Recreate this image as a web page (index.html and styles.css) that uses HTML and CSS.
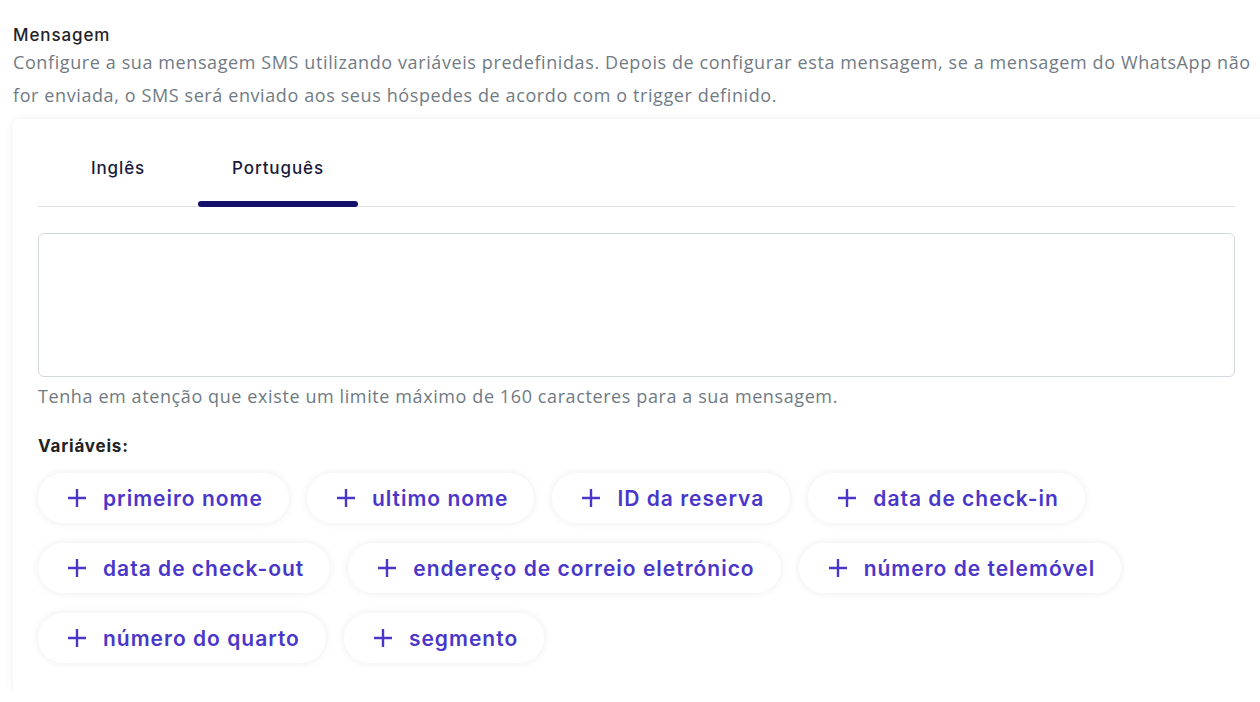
FILE: index.html
```html
<!DOCTYPE html>
<html lang="pt">
<head>
<meta charset="utf-8">
<link rel="stylesheet" href="styles.css">
</head>
<body>
<div class="page">
  <h2 class="title">Mensagem</h2>
  <p class="desc">Configure a sua mensagem SMS utilizando variáveis predefinidas. Depois de configurar esta mensagem, se a mensagem do WhatsApp não for enviada, o SMS será enviado aos seus hóspedes de acordo com o trigger definido.</p>
  <div class="card">
    <div class="tabs">
      <div class="tab">Inglês</div>
      <div class="tab active">Português</div>
    </div>
    <div class="textarea"></div>
    <p class="hint">Tenha em atenção que existe um limite máximo de 160 caracteres para a sua mensagem.</p>
    <div class="vars-label">Variáveis:</div>
    <div class="chips">
      <button class="chip"><svg viewBox="0 0 20 20"><path d="M10 1v18M1 10h18"/></svg>primeiro nome</button>
      <button class="chip"><svg viewBox="0 0 20 20"><path d="M10 1v18M1 10h18"/></svg>ultimo nome</button>
      <button class="chip"><svg viewBox="0 0 20 20"><path d="M10 1v18M1 10h18"/></svg>ID da reserva</button>
      <button class="chip"><svg viewBox="0 0 20 20"><path d="M10 1v18M1 10h18"/></svg>data de check-in</button>
      <button class="chip"><svg viewBox="0 0 20 20"><path d="M10 1v18M1 10h18"/></svg>data de check-out</button>
      <button class="chip"><svg viewBox="0 0 20 20"><path d="M10 1v18M1 10h18"/></svg>endereço de correio eletrónico</button>
      <button class="chip"><svg viewBox="0 0 20 20"><path d="M10 1v18M1 10h18"/></svg>número de telemóvel</button>
      <button class="chip"><svg viewBox="0 0 20 20"><path d="M10 1v18M1 10h18"/></svg>número do quarto</button>
      <button class="chip"><svg viewBox="0 0 20 20"><path d="M10 1v18M1 10h18"/></svg>segmento</button>
    </div>
  </div>
</div>
</body>
</html>
```
FILE: styles.css
```css
html, body {
  margin: 0;
  padding: 0;
  background: #ffffff;
  overflow: hidden;
}
.page {
  padding: 24px 0 0 13px;
  width: 1260px;
  box-sizing: border-box;
}
.title {
  margin: 0;
  font-family: "Inter", "Open Sans", sans-serif;
  font-weight: 500;
  font-size: 17px;
  letter-spacing: 0.9px;
  line-height: 22px;
  color: #1f2328;
}
.desc {
  margin: 0;
  font-family: "Open Sans", sans-serif;
  font-size: 18px;
  letter-spacing: 0.6px;
  line-height: 33px;
  color: #717b84;
  padding-right: 2px;
}
.card {
  margin-top: 7px;
  width: 1260px;
  box-sizing: border-box;
  padding: 0 12px 29px 25px;
  background: #fff;
  border-radius: 6px;
  box-shadow: 0 0 10px rgba(0, 0, 0, 0.07);
}
.tabs {
  display: flex;
  border-bottom: 1px solid #dde1e4;
  width: 1197px;
}
.tab {
  width: 160px;
  text-align: center;
  font-family: "Inter", "Open Sans", sans-serif;
  font-weight: 500;
  font-size: 17px;
  letter-spacing: 0.9px;
  line-height: 22px;
  color: #1a1a3d;
  padding: 38px 0 0;
  height: 87px;
  box-sizing: border-box;
  position: relative;
}
.tab.active::after {
  content: "";
  position: absolute;
  left: 0;
  right: 0;
  bottom: -1px;
  height: 6px;
  border-radius: 3px;
  background: #140f6b;
}
.textarea {
  margin-top: 26px;
  width: 1197px;
  height: 144px;
  box-sizing: border-box;
  border: 1px solid #d3d8dc;
  border-radius: 6px;
}
.hint {
  margin: 6px 0 0;
  font-family: "Open Sans", sans-serif;
  font-size: 18px;
  letter-spacing: 0.6px;
  line-height: 26px;
  color: #6f7a83;
}
.vars-label {
  margin-top: 26px;
  font-family: "Inter", "Open Sans", sans-serif;
  font-weight: 700;
  font-size: 17px;
  letter-spacing: 0.8px;
  line-height: 22px;
  color: #222;
}
.chips {
  margin-top: 16px;
  display: flex;
  flex-wrap: wrap;
  gap: 20px 18px;
  width: 1150px;
}
.chip {
  display: inline-flex;
  align-items: center;
  gap: 16px;
  height: 50px;
  padding: 0 26px 0 29px;
  border: none;
  border-radius: 25px;
  background: #fff;
  box-shadow: 0 0 8px rgba(0, 0, 0, 0.08);
  font-family: "Inter", "Open Sans", sans-serif;
  font-weight: 600;
  font-size: 21px;
  letter-spacing: 1px;
  color: #4a37c9;
  cursor: pointer;
}
.chip svg {
  width: 20px;
  height: 20px;
  flex: none;
  fill: none;
  stroke: #4a37c9;
  stroke-width: 2.4;
}
```
